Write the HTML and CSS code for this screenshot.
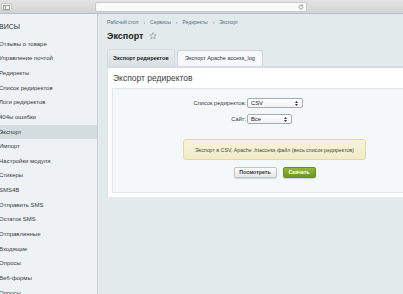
FILE: index.html
```html
<!DOCTYPE html>
<html lang="ru">
<head>
<meta charset="utf-8">
<title>Экспорт</title>
<link rel="stylesheet" href="styles.css">
</head>
<body>
<div class="topbar">
  <div class="tb-btn">
    <svg width="7" height="5" viewBox="0 0 7 5"><rect x="0.5" y="0.5" width="6" height="4" fill="none" stroke="#8a8a8a" stroke-width="0.8"/><line x1="2.5" y1="0.5" x2="2.5" y2="4.5" stroke="#8a8a8a" stroke-width="0.8"/></svg>
  </div>
  <div class="addr">
    <svg class="reload" width="6" height="6" viewBox="0 0 6 6"><path d="M5 3a2 2 0 1 1-0.6-1.4" fill="none" stroke="#8c8c8c" stroke-width="0.9"/><path d="M4.6 0.6v1.5H3.1" fill="none" stroke="#8c8c8c" stroke-width="0.9"/></svg>
  </div>
</div>
<div class="layout">
  <aside class="sidebar">
    <div class="side-title">ВИСЫ</div>
    <ul class="menu">
      <li>Отзывы о товаре</li>
      <li>Управление почтой</li>
      <li>Редиректы</li>
      <li>Список редиректов</li>
      <li>Логи редиректов</li>
      <li>404ы ошибки</li>
      <li class="active">Экспорт</li>
      <li>Импорт</li>
      <li>Настройки модуля</li>
      <li>Стикеры</li>
      <li>SMS4B</li>
      <li>Отправить SMS</li>
      <li>Остаток SMS</li>
      <li>Отправленные</li>
      <li>Входящие</li>
      <li>Опросы</li>
      <li>Веб-формы</li>
      <li>Опросы</li>
    </ul>
  </aside>
  <main class="main">
    <div class="crumbs">
      <span>Рабочий стол</span><span class="sep">›</span><span>Сервисы</span><span class="sep">›</span><span>Редиректы</span><span class="sep">›</span><span>Экспорт</span>
    </div>
    <h1 class="title">Экспорт
      <svg class="star" width="8" height="8" viewBox="0 0 10 10"><path d="M5 0.8l1.25 2.7 2.9 0.3-2.2 1.95 0.65 2.85L5 7.1 2.4 8.6l0.65-2.85L0.85 3.8l2.9-0.3z" fill="none" stroke="#9a9a9a" stroke-width="0.9" stroke-linejoin="round"/></svg>
    </h1>
    <div class="tabs">
      <div class="tab active">Экспорт редиректов</div>
      <div class="tab">Экспорт Apache access_log</div>
    </div>
    <div class="panel">
      <h2 class="panel-title">Экспорт редиректов</h2>
      <div class="box">
        <div class="form">
          <span class="label">Список редиректов:</span>
          <div class="sel sel-wide">CSV<svg class="arr" width="3" height="5" viewBox="0 0 3 5"><path d="M1.5 0L3 2H0zM1.5 5L0 3h3z" fill="#333"/></svg></div>
          <span class="label">Сайт:</span>
          <div class="sel sel-narrow">Все<svg class="arr" width="3" height="5" viewBox="0 0 3 5"><path d="M1.5 0L3 2H0zM1.5 5L0 3h3z" fill="#333"/></svg></div>
        </div>
        <div class="notice">Экспорт в CSV, Apache .htaccess файл (весь список редиректов)</div>
        <div class="buttons">
          <button class="btn btn-view">Посмотреть</button>
          <button class="btn btn-dl">Скачать</button>
        </div>
      </div>
    </div>
  </main>
</div>
</body>
</html>
```
FILE: styles.css
```css
html, body {
  margin: 0;
  padding: 0;
  overflow: hidden;
  width: 403px;
  height: 294px;
}
body {
  font-family: "Liberation Sans", Arial, sans-serif;
  background: #e3eaec;
  color: #333;
}
.topbar {
  height: 13px;
  border-bottom: 1px solid #bdbdbd;
  background: linear-gradient(#e4e4e4, #d3d3d3);
  display: flex;
  align-items: flex-start;
}
.tb-btn {
  width: 11px;
  height: 8px;
  margin: 3px 0 0 1px;
  box-sizing: border-box;
  background: #f7f7f7;
  border: 1px solid #c3c3c3;
  border-radius: 2px;
  display: flex;
  align-items: center;
  justify-content: center;
}
.tb-btn svg { display: block; }
.addr {
  width: 212px;
  height: 10px;
  margin: 2px 0 0 83px;
  box-sizing: border-box;
  background: #fafafa;
  border: 1px solid #cacaca;
  border-radius: 2px;
  display: flex;
  justify-content: flex-end;
  align-items: center;
  padding-right: 2px;
}
.reload { display: block; }
.layout {
  display: flex;
  width: 460px;
  height: 280px;
}
.sidebar {
  width: 97px;
  flex: none;
  background: #eef2f4;
  border-right: 1px solid #c9d1d4;
  overflow: hidden;
}
.side-title {
  padding-top: 7px;
  height: 12px;
  line-height: 12px;
  margin-left: -1px;
  margin-bottom: 3.7px;
  font-size: 7px;
  color: #2c2c2c;
}
.menu {
  list-style: none;
  margin: 0;
  padding: 0;
}
.menu li {
  height: 14.65px;
  line-height: 14.65px;
  font-size: 6px;
  color: #3a3a3a;
  text-indent: -1px;
  white-space: nowrap;
}
.menu li.active {
  background: #d3dcdf;
}
.main {
  flex: 1;
  padding: 4px 17px 0 9px;
}
.crumbs {
  height: 8px;
  line-height: 8px;
  font-size: 5px;
  color: #4d6f8a;
  white-space: nowrap;
}
.crumbs .sep {
  margin: 0 5px;
  color: #7f8f99;
}
.title {
  margin: 3px 0 5px;
  height: 14px;
  line-height: 14px;
  font-size: 9px;
  font-weight: bold;
  color: #222;
  display: flex;
  align-items: center;
  gap: 5px;
}
.star { display: block; }
.tabs {
  display: flex;
  align-items: flex-end;
  height: 18px;
  border-bottom: 2px solid #d6dde0;
}
.tab {
  box-sizing: border-box;
  height: 16px;
  border: 1px solid #cdd5d8;
  border-bottom: none;
  border-radius: 3px 3px 0 0;
  font-size: 5.5px;
  line-height: 15px;
  white-space: nowrap;
  color: #333;
}
.tab.active {
  width: 68px;
  height: 17px;
  line-height: 16px;
  padding-left: 5px;
  background: linear-gradient(#e8edef, #d9e1e4);
  font-weight: bold;
  color: #1f1f1f;
  border-color: #d3dbde;
}
.tab:not(.active) {
  width: 86px;
  margin-left: 2px;
  padding-left: 7px;
  background: #f6f8f9;
}
.panel {
  background: #fff;
  border-left: 1px solid #dde4e6;
  border-right: 1px solid #dde4e6;
  padding: 4px 5px 4px 4px;
}
.panel-title {
  margin: 0 0 4px;
  padding-left: 1px;
  height: 12px;
  line-height: 12px;
  font-size: 8.5px;
  font-weight: normal;
  color: #3c3c3c;
}
.box {
  background: #f5f8f9;
  border: 1px solid #e2e8ea;
  padding: 9px 0 14px;
}
.form {
  display: grid;
  grid-template-columns: 133px auto;
  column-gap: 1px;
  row-gap: 6px;
  align-items: center;
}
.label {
  text-align: right;
  font-size: 5.7px;
  line-height: 10px;
  color: #3a3a3a;
}
.sel {
  box-sizing: border-box;
  height: 10px;
  background: linear-gradient(#ffffff, #f3f3f3);
  border: 1px solid #a6adb1;
  border-radius: 2px;
  font-size: 5.8px;
  line-height: 8px;
  padding-left: 3px;
  color: #222;
  display: flex;
  align-items: center;
  justify-content: space-between;
  padding-right: 4px;
}
.sel-wide { width: 56px; }
.sel-narrow { width: 45px; }
.arr { display: block; }
.notice {
  box-sizing: border-box;
  width: 183px;
  height: 21px;
  margin: 15px auto 0;
  background: linear-gradient(#f8f4da, #f1ebc8);
  border: 1px solid #e2d8a9;
  border-radius: 3px;
  display: flex;
  align-items: center;
  justify-content: center;
  font-size: 5.3px;
  color: #4a4a4a;
  white-space: nowrap;
}
.buttons {
  display: flex;
  justify-content: center;
  gap: 6px;
  margin-top: 7px;
}
.btn {
  box-sizing: border-box;
  height: 11px;
  padding: 0;
  border-radius: 2px;
  font-family: "Liberation Sans", Arial, sans-serif;
  font-size: 5.3px;
  font-weight: bold;
  line-height: 9px;
  cursor: pointer;
}
.btn-view {
  width: 43px;
  background: linear-gradient(#ffffff, #e2e7e9);
  border: 1px solid #bcc4c7;
  color: #333;
  box-shadow: 0 1px 1px rgba(0,0,0,0.12);
}
.btn-dl {
  width: 33px;
  background: linear-gradient(#91b93d, #6e951f);
  border: 1px solid #6b8f1f;
  color: #fff;
  box-shadow: 0 1px 1px rgba(0,0,0,0.15);
}
```
